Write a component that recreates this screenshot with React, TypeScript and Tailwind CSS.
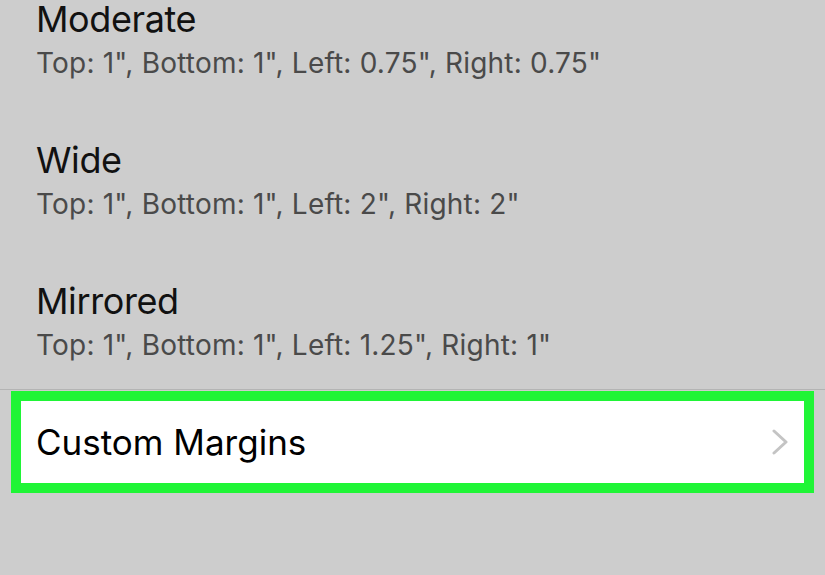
import React from 'react';

const presets = [
  { name: 'Moderate', detail: 'Top: 1", Bottom: 1", Left: 0.75", Right: 0.75"' },
  { name: 'Wide', detail: 'Top: 1", Bottom: 1", Left: 2", Right: 2"' },
  { name: 'Mirrored', detail: 'Top: 1", Bottom: 1", Left: 1.25", Right: 1"' },
];

const App: React.FC = () => {
  return (
    <div
      className="w-[825px] h-[575px] overflow-hidden bg-[#cdcdcd]"
      style={{ fontFamily: 'Inter, "Noto Sans", sans-serif' }}
    >
      {/* Preset list (scrolled, first row partly cut off) */}
      <div className="-mt-[34px]">
        {presets.map((p) => (
          <div key={p.name} className="pl-[36px] pt-[33px] pb-[28px]">
            <div className="text-[36px] leading-[40px] tracking-[-0.4px] text-[#111111]">{p.name}</div>
            <div className="mt-[8px] text-[28px] leading-[32px] tracking-[0.2px] text-[#4a4a4a]">{p.detail}</div>
          </div>
        ))}
      </div>

      {/* Divider */}
      <div className="h-px bg-[#b4b4b4]" />

      {/* Highlighted custom margins row */}
      <div className="mt-px mx-[11px] h-[102px] border-[10px] border-[#1ff536] bg-white flex items-center justify-between pl-[15px] pr-[16px]">
        <span className="text-[35px] text-black">Custom Margins</span>
        <svg width="16" height="26" viewBox="0 0 16 26" fill="none">
          <polyline
            points="2,2 14,13 2,24"
            stroke="#c4c4c4"
            strokeWidth="3"
            strokeLinecap="round"
            strokeLinejoin="round"
          />
        </svg>
      </div>
    </div>
  );
};

export default App;
